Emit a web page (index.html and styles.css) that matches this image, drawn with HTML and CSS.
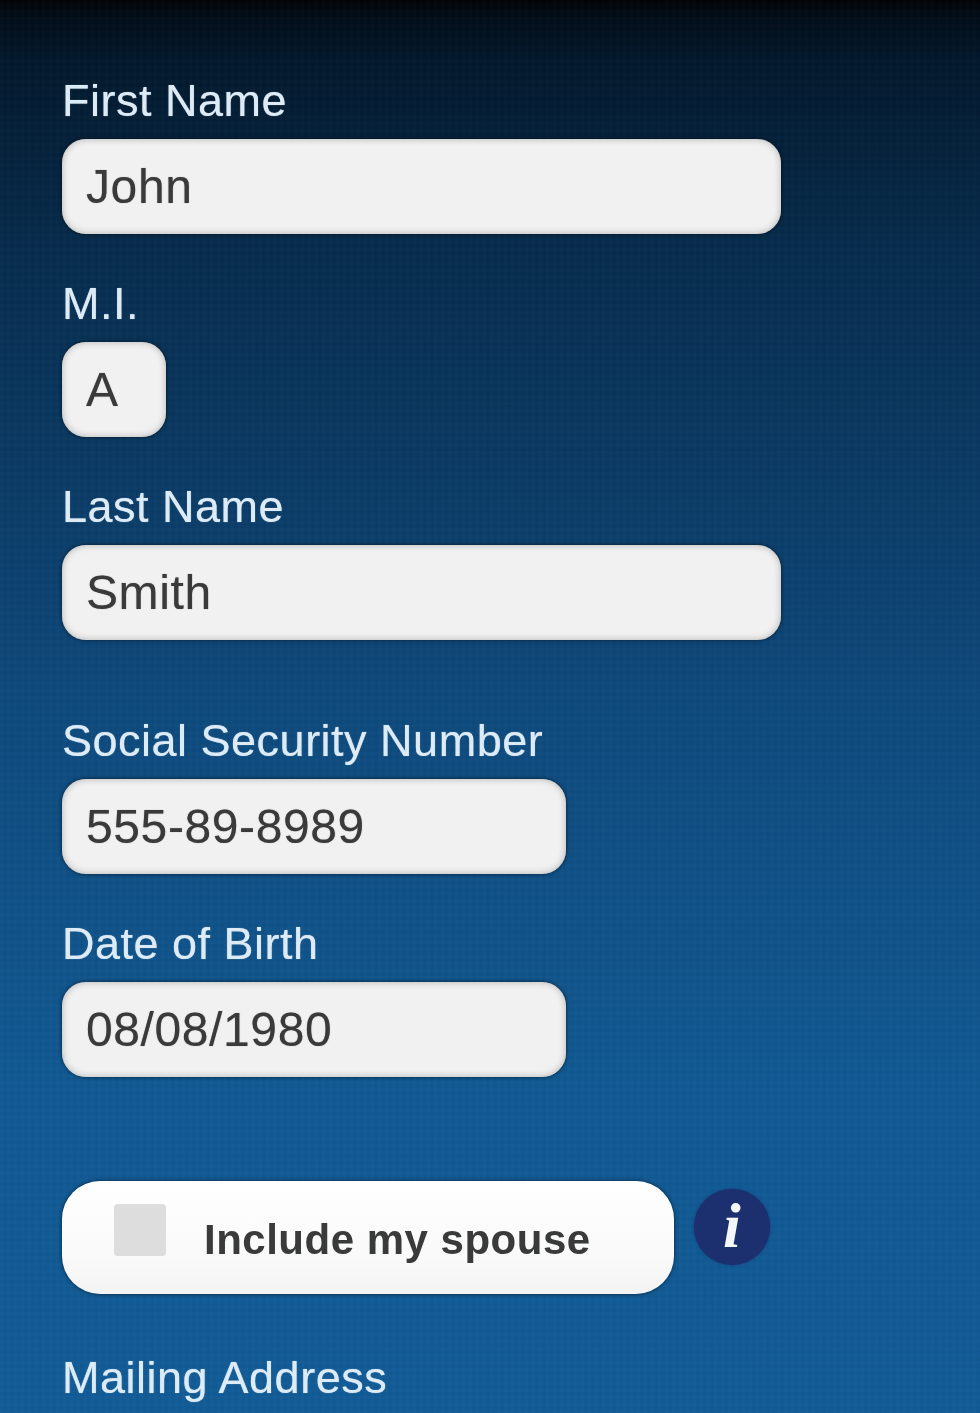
FILE: index.html
```html
<!DOCTYPE html>
<html lang="en">
<head>
  <meta charset="UTF-8">
  <title>Personal Information</title>
  <link rel="stylesheet" href="styles.css">
</head>
<body>
  <form class="form">
    <div class="field">
      <label for="firstName">First Name</label>
      <input class="input-wide" type="text" id="firstName" value="John">
    </div>
    <div class="field">
      <label for="middleInitial">M.I.</label>
      <input class="input-tiny" type="text" id="middleInitial" value="A">
    </div>
    <div class="field section-end">
      <label for="lastName">Last Name</label>
      <input class="input-wide" type="text" id="lastName" value="Smith">
    </div>
    <div class="field">
      <label for="ssn">Social Security Number</label>
      <input class="input-mid" type="text" id="ssn" value="555-89-8989">
    </div>
    <div class="field section-end-large">
      <label for="dob">Date of Birth</label>
      <input class="input-mid" type="text" id="dob" value="08/08/1980">
    </div>
    <div class="spouse-row">
      <label class="spouse-button" for="spouse">
        <input class="spouse-check" type="checkbox" id="spouse">
        <span>Include my spouse</span>
      </label>
      <span class="info-icon">i</span>
    </div>
    <div class="field">
      <label for="address">Mailing Address</label>
    </div>
  </form>
</body>
</html>
```

FILE: styles.css
```css
html, body {
  height: 100%;
}

body {
  font-family: "Liberation Sans", Arial, sans-serif;
  margin: 0;
  overflow: hidden;
  background-color: #0f5a96;
  background-image:
    repeating-linear-gradient(90deg, rgba(255, 255, 255, 0.008) 0 3px, rgba(0, 0, 0, 0.012) 3px 7px),
    repeating-linear-gradient(0deg, rgba(255, 255, 255, 0.006) 0 3px, rgba(0, 0, 0, 0.01) 3px 7px),
    linear-gradient(180deg, #020406 0, #020c16 14px, #03182c 60px, #072c4e 250px, #0e4a7c 700px, #115a94 1100px, #125c97 1413px);
}

.form {
  display: flex;
  flex-direction: column;
  padding: 76px 0 0 62px;
  filter: blur(0.7px);
}

.field {
  display: flex;
  flex-direction: column;
  align-items: flex-start;
  margin-bottom: 45px;
}

.section-end {
  margin-bottom: 76px;
}

.section-end-large {
  margin-bottom: 104px;
}

label {
  color: #dcebf6;
  font-size: 45px;
  letter-spacing: 0.5px;
  line-height: 50px;
  margin-bottom: 13px;
  text-shadow: 0 0 1px rgba(220, 235, 246, 0.7);
}

input[type="text"] {
  box-sizing: border-box;
  height: 95px;
  padding: 0 24px;
  border: none;
  border-radius: 24px;
  outline: none;
  background-color: #f1f1f1;
  box-shadow: inset 0 0 7px #b0b0b0, 0 0 4px rgba(0, 0, 0, 0.6);
  color: #3a3a3a;
  font-family: inherit;
  font-size: 48px;
  letter-spacing: 0.6px;
  text-shadow: 0 0 1px rgba(58, 58, 58, 0.6);
}

.input-wide {
  width: 719px;
}

.input-mid {
  width: 504px;
}

.input-tiny {
  width: 104px;
}

.spouse-row {
  display: flex;
  align-items: flex-start;
  gap: 20px;
  margin-bottom: 59px;
}

.spouse-button {
  box-sizing: border-box;
  display: flex;
  align-items: center;
  width: 612px;
  height: 113px;
  margin: 0;
  padding: 4px 0 0 52px;
  border-radius: 38px;
  background-image: linear-gradient(180deg, #ffffff 0, #f9f9f9 70%, #f3f3f3 100%);
  box-shadow: 0 0 4px rgba(0, 0, 0, 0.6);
  color: #3a3a3a;
  font-size: 42px;
  font-weight: bold;
  letter-spacing: 0.5px;
}

.spouse-check {
  appearance: none;
  flex: none;
  width: 52px;
  height: 52px;
  margin: -20px 38px 0 0;
  border-radius: 4px;
  background-color: #dddddd;
}

.info-icon {
  width: 76px;
  height: 76px;
  margin-top: 8px;
  border-radius: 50%;
  background-color: #1c2f6e;
  box-shadow: 0 0 3px #1c2f6e;
  color: #f4f6fa;
  font-family: "Liberation Serif", serif;
  font-size: 64px;
  font-style: italic;
  font-weight: bold;
  line-height: 74px;
  text-align: center;
}
```
